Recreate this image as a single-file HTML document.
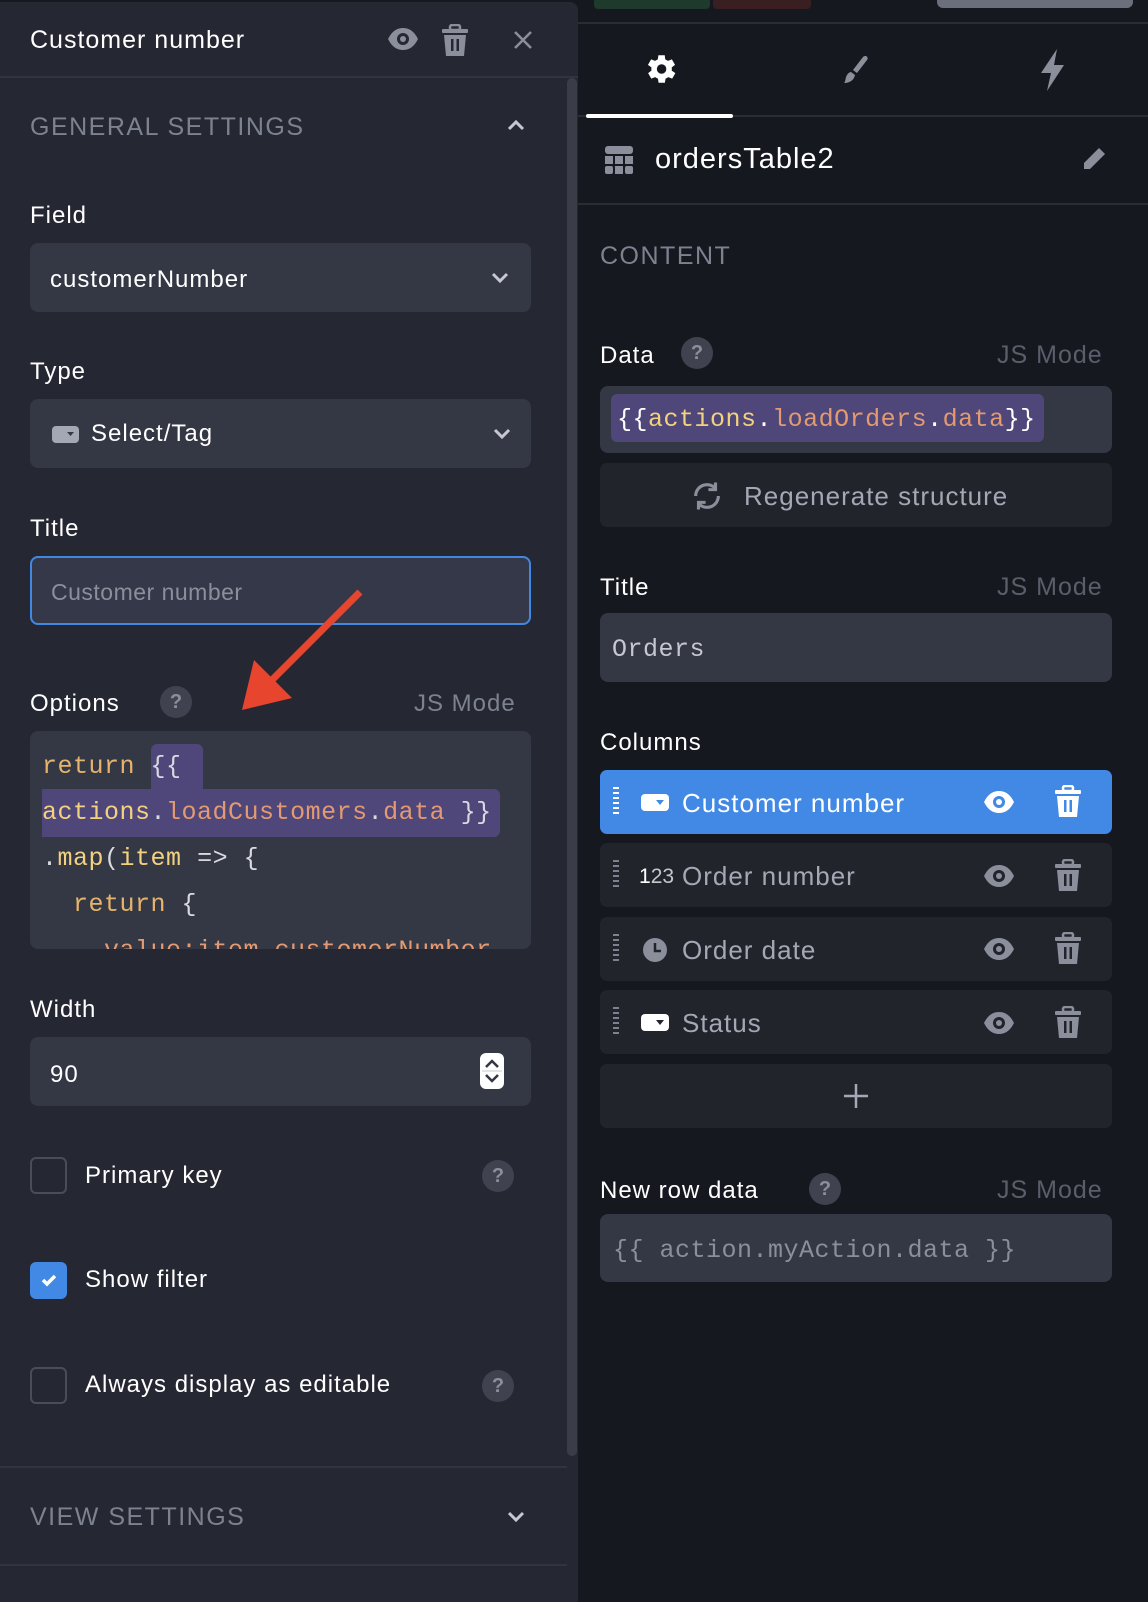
<!DOCTYPE html>
<html><head><meta charset="utf-8"><style>
*{box-sizing:border-box;margin:0;padding:0}
body{width:1148px;height:1602px;background:#16181f;font-family:"Liberation Sans",sans-serif;color:#fff;position:relative;overflow:hidden;letter-spacing:1px}
.a{position:absolute}
.lbl{font-size:24px;color:#fff;font-weight:500}
.muted{color:#7d8290}
.inp{position:absolute;background:#343744;border-radius:8px}
.mono{font-family:"Liberation Mono",monospace;letter-spacing:0.5px}
.q{position:absolute;width:32px;height:32px;border-radius:50%;background:#40434f;color:#8b8f9b;font-size:20px;font-weight:bold;text-align:center;line-height:32px;letter-spacing:0}
.row{position:absolute;left:600px;width:512px;height:64px;background:#22242c;border-radius:7px}
.row .t{position:absolute;left:82px;top:18px;font-size:26px;color:#a4a8b4;font-weight:500}
.grip{position:absolute;left:13px;top:17px;width:6px;height:30px;background:repeating-linear-gradient(#7d8290 0 2px,transparent 2px 5px)}
.cb{position:absolute;left:30px;width:37px;height:37px;border:2px solid #4a4d59;border-radius:6px}
</style></head><body>
<div class="a" style="left:594px;top:0;width:116px;height:9px;background:#1d3a2d;border-radius:0 0 4px 4px"></div>
<div class="a" style="left:713px;top:0;width:98px;height:9px;background:#3a1f22;border-radius:0 0 4px 4px"></div>
<div class="a" style="left:937px;top:0;width:196px;height:8px;background:#6b6f7c;border-radius:0 0 6px 6px"></div>
<div class="a" style="left:578px;top:22px;width:570px;height:2px;background:#2a2d37"></div>

<div class="a" style="left:0;top:2px;width:578px;height:1600px;background:#252732;border-radius:0 8px 0 0"></div>
<div class="a" style="left:567px;top:78px;width:10px;height:1378px;background:#3a3d48;border-radius:5px"></div>
<div class="a" style="left:0;top:76px;width:578px;height:2px;background:#31343f"></div>
<div class="a lbl" style="left:30px;top:26px;font-size:25px">Customer number</div>
<svg class="a" style="left:387px;top:26px" width="32" height="26" viewBox="0 0 32 26"><path d="M1 13C5 5 10 2 16 2s11 3 15 11c-4 8-9 11-15 11S5 21 1 13z" fill="#8b8f9b"/><circle cx="16" cy="13" r="6" fill="#252732"/><circle cx="16" cy="13" r="3" fill="#8b8f9b"/></svg>
<svg class="a" style="left:440px;top:24px" width="30" height="34" viewBox="0 0 30 34"><rect x="2" y="5" width="26" height="4" rx="1" fill="#8b8f9b"/><rect x="10" y="1" width="10" height="5" rx="2" fill="none" stroke="#8b8f9b" stroke-width="2.5"/><path d="M4 11h22l-2 21H6z" fill="#8b8f9b"/><rect x="11" y="15" width="2.5" height="12" fill="#252732"/><rect x="16.5" y="15" width="2.5" height="12" fill="#252732"/></svg>
<svg class="a" style="left:513px;top:30px" width="20" height="20" viewBox="0 0 20 20"><path d="M2 2L18 18M18 2L2 18" stroke="#8b8f9b" stroke-width="2.5"/></svg>

<div class="a muted" style="left:30px;top:113px;font-size:25px;letter-spacing:1.5px">GENERAL SETTINGS</div>
<svg class="a" style="left:506px;top:118px" width="20" height="14" viewBox="0 0 20 14"><path d="M3 11l7-7 7 7" stroke="#c5c8d0" stroke-width="3" fill="none"/></svg>

<div class="a lbl" style="left:30px;top:202px">Field</div>
<div class="inp" style="left:30px;top:243px;width:501px;height:69px"></div>
<div class="a lbl" style="left:50px;top:266px;font-size:24px">customerNumber</div>
<svg class="a" style="left:490px;top:271px" width="20" height="14" viewBox="0 0 20 14"><path d="M3 3l7 7 7-7" stroke="#c5c8d0" stroke-width="3" fill="none"/></svg>

<div class="a lbl" style="left:30px;top:358px">Type</div>
<div class="inp" style="left:30px;top:399px;width:501px;height:69px"></div>
<svg class="a" style="left:52px;top:426px" width="27" height="17" viewBox="0 0 27 17"><rect width="27" height="17" rx="4" fill="#a4a8b4"/><path d="M15 6h7l-3.5 4z" fill="#343744"/></svg>
<div class="a lbl" style="left:91px;top:420px">Select/Tag</div>
<svg class="a" style="left:492px;top:427px" width="20" height="14" viewBox="0 0 20 14"><path d="M3 3l7 7 7-7" stroke="#c5c8d0" stroke-width="3" fill="none"/></svg>

<div class="a lbl" style="left:30px;top:515px">Title</div>
<div class="inp" style="left:30px;top:556px;width:501px;height:69px;border:2px solid #4188e3;background:#353848"></div>
<div class="a" style="left:51px;top:579px;font-size:23px;color:#8b8f9b;letter-spacing:0.5px">Customer number</div>
<svg class="a" style="left:236px;top:586px" width="130" height="130" viewBox="0 0 130 130"><path d="M124 6L22 108" stroke="#e8452f" stroke-width="7"/><path d="M6 124l12-50 38 38z" fill="#e8452f"/></svg>

<div class="a lbl" style="left:30px;top:690px">Options</div>
<div class="q" style="left:160px;top:686px">?</div>
<div class="a muted" style="left:414px;top:690px;font-size:24px">JS Mode</div>
<div class="inp" style="left:30px;top:731px;width:501px;height:218px;overflow:hidden">
 <div class="a" style="left:121px;top:13px;width:52px;height:48px;background:#4f4679;border-radius:6px 6px 0 0"></div>
 <div class="a" style="left:12px;top:58px;width:458px;height:48px;background:#4f4679;border-radius:0 6px 6px 0"></div>
 <div class="a mono" style="left:12px;top:13px;font-size:25px;line-height:46px;color:#d8dae0;white-space:pre"><span style="color:#e6b46c">return</span> {{
<span style="color:#f3d27f">actions</span>.<span style="color:#e39a72">loadCustomers</span>.<span style="color:#e39a72">data</span> }}
.<span style="color:#f3d27f">map</span>(<span style="color:#f3d27f">item</span> =&gt; {
  <span style="color:#e6b46c">return</span> {
    <span style="color:#e39a72">value:item.customerNumber</span></div>
</div>

<div class="a lbl" style="left:30px;top:996px">Width</div>
<div class="inp" style="left:30px;top:1037px;width:501px;height:69px"></div>
<div class="a lbl" style="left:50px;top:1061px">90</div>
<svg class="a" style="left:480px;top:1053px" width="24" height="36" viewBox="0 0 24 36"><rect width="24" height="36" rx="6" fill="#fff"/><path d="M6 14l6-6 6 6M6 22l6 6 6-6" stroke="#343744" stroke-width="2.5" fill="none"/><path d="M2 18h20" stroke="#c5c8d0"/></svg>

<div class="cb" style="top:1157px"></div>
<div class="a lbl" style="left:85px;top:1162px">Primary key</div>
<div class="q" style="left:482px;top:1160px">?</div>
<div class="cb" style="top:1262px;background:#4189e5;border-color:#4189e5"></div>
<svg class="a" style="left:39px;top:1270px" width="20" height="20" viewBox="0 0 20 20"><path d="M4 10l4 4 8-8" stroke="#fff" stroke-width="3.5" fill="none"/></svg>
<div class="a lbl" style="left:85px;top:1266px">Show filter</div>
<div class="cb" style="top:1367px"></div>
<div class="a lbl" style="left:85px;top:1371px">Always display as editable</div>
<div class="q" style="left:482px;top:1370px">?</div>

<div class="a" style="left:0;top:1466px;width:567px;height:2px;background:#31343f"></div>
<div class="a muted" style="left:30px;top:1503px;font-size:25px;letter-spacing:1.5px">VIEW SETTINGS</div>
<svg class="a" style="left:506px;top:1510px" width="20" height="14" viewBox="0 0 20 14"><path d="M3 3l7 7 7-7" stroke="#c5c8d0" stroke-width="3" fill="none"/></svg>
<div class="a" style="left:0;top:1564px;width:567px;height:2px;background:#31343f"></div>

<svg class="a" style="left:641px;top:50px" width="38" height="38" viewBox="0 0 24 24"><path fill="#fff" d="M19.4 13a7.5 7.5 0 000-2l2.1-1.6-2-3.5-2.5 1a7 7 0 00-1.7-1L15 3.3h-4l-.4 2.6a7 7 0 00-1.7 1l-2.5-1-2 3.5L6.6 11a7.5 7.5 0 000 2l-2.1 1.6 2 3.5 2.5-1a7 7 0 001.7 1l.4 2.6h4l.4-2.6a7 7 0 001.7-1l2.5 1 2-3.5z"/><circle cx="13" cy="12" r="3" fill="#16181f"/></svg>
<svg class="a" style="left:840px;top:54px" width="30" height="32" viewBox="0 0 30 32"><path d="M26 2c2 1 2 3 1 4L17 19l-4-3L23 3c1-1 2-1 3-1z" fill="#8b8f9b"/><path d="M11 18l4 3c-1 5-5 8-11 8 2-2 1-5 3-8 1-2 3-3 4-3z" fill="#8b8f9b"/></svg>
<svg class="a" style="left:1037px;top:48px" width="30" height="44" viewBox="0 0 30 44"><path d="M20 1L4 25h10l-4 18 17-26H17z" fill="#8b8f9b"/></svg>
<div class="a" style="left:578px;top:115px;width:570px;height:2px;background:#2a2d37"></div>
<div class="a" style="left:586px;top:114px;width:147px;height:4px;background:#fff;border-radius:2px"></div>

<svg class="a" style="left:605px;top:146px" width="28" height="28" viewBox="0 0 28 28"><rect width="28" height="8" rx="3" fill="#8b8f9b"/><g fill="#8b8f9b"><rect y="10" width="8" height="8"/><rect x="10" y="10" width="8" height="8"/><rect x="20" y="10" width="8" height="8"/><rect y="20" width="8" height="8" rx="2"/><rect x="10" y="20" width="8" height="8"/><rect x="20" y="20" width="8" height="8" rx="2"/></g></svg>
<div class="a" style="left:655px;top:143px;font-size:29px;font-weight:500">ordersTable2</div>
<svg class="a" style="left:1081px;top:146px" width="26" height="26" viewBox="0 0 26 26"><path d="M18 2l6 6L9 23H3v-6z" fill="#8b8f9b"/></svg>
<div class="a" style="left:578px;top:203px;width:570px;height:2px;background:#2a2d37"></div>

<div class="a muted" style="left:600px;top:242px;font-size:25px;letter-spacing:1.5px">CONTENT</div>
<div class="a lbl" style="left:600px;top:342px">Data</div>
<div class="q" style="left:681px;top:337px">?</div>
<div class="a" style="left:997px;top:341px;font-size:25px;color:#5a5e6a">JS Mode</div>
<div class="inp" style="left:600px;top:386px;width:512px;height:67px"></div>
<div class="a" style="left:611px;top:394px;width:433px;height:48px;background:#4f4679;border-radius:6px"></div>
<div class="a mono" style="left:617px;top:405px;font-size:25px;color:#fff">{{<span style="color:#f3d27f">actions</span>.<span style="color:#e39a72">loadOrders</span>.<span style="color:#e39a72">data</span>}}</div>
<div class="a" style="left:600px;top:463px;width:512px;height:64px;background:#22242c;border-radius:7px"></div>
<svg class="a" style="left:690px;top:479px" width="34" height="34" viewBox="0 0 24 24"><path d="M20 12a8 8 0 01-14 5.3M4 12a8 8 0 0114-5.3" stroke="#8b8f9b" stroke-width="2.2" fill="none"/><path d="M18 2.5v5h-5M6 21.5v-5h5" stroke="#8b8f9b" stroke-width="2.2" fill="none"/></svg>
<div class="a" style="left:744px;top:481px;font-size:26px;color:#a4a8b4;font-weight:500">Regenerate structure</div>

<div class="a lbl" style="left:600px;top:574px">Title</div>
<div class="a" style="left:997px;top:573px;font-size:25px;color:#5a5e6a">JS Mode</div>
<div class="inp" style="left:600px;top:613px;width:512px;height:69px"></div>
<div class="a mono" style="left:612px;top:635px;font-size:25px;color:#c5c8d0">Orders</div>

<div class="a lbl" style="left:600px;top:729px">Columns</div>
<div class="row" style="top:770px;background:#4189e5"><div class="grip" style="background:repeating-linear-gradient(#fff 0 2px,transparent 2px 5px)"></div>
<svg class="a" style="left:41px;top:24px" width="28" height="17" viewBox="0 0 28 17"><rect width="28" height="17" rx="4" fill="#fff"/><path d="M15 6h8l-4 5z" fill="#4189e5"/></svg>
<div class="t" style="color:#fff">Customer number</div></div>
<div class="row" style="top:843px"><div class="grip"></div><div class="a" style="left:39px;top:22px;font-size:21px;color:#fff;letter-spacing:0">1<span style="color:#c5c8d0">23</span></div><div class="t">Order number</div></div>
<div class="row" style="top:917px"><div class="grip"></div><svg class="a" style="left:42px;top:20px" width="26" height="26" viewBox="0 0 26 26"><circle cx="13" cy="13" r="12" fill="#8b8f9b"/><path d="M13 6v8h6" stroke="#22242c" stroke-width="2.5" fill="none"/></svg><div class="t">Order date</div></div>
<div class="row" style="top:990px"><div class="grip"></div><svg class="a" style="left:41px;top:24px" width="28" height="17" viewBox="0 0 28 17"><rect width="28" height="17" rx="4" fill="#fff"/><path d="M15 6h8l-4 5z" fill="#22242c"/></svg><div class="t">Status</div></div>

<svg width="0" height="0" style="position:absolute"><defs>
<g id="eye"><path d="M1 13C5 5 10 2 16 2s11 3 15 11c-4 8-9 11-15 11S5 21 1 13z"/><circle cx="16" cy="13" r="6" fill="var(--bg)"/><circle cx="16" cy="13" r="3"/></g>
<g id="tr"><rect x="2" y="5" width="26" height="4" rx="1"/><rect x="10" y="1" width="10" height="5" rx="2" fill="none" stroke="currentColor" stroke-width="2.5"/><path d="M4 11h22l-2 21H6z"/><rect x="11" y="15" width="2.5" height="12" fill="var(--bg)"/><rect x="16.5" y="15" width="2.5" height="12" fill="var(--bg)"/></g>
</defs></svg>
<svg class="a" style="left:983px;top:789px;--bg:#4189e5;fill:#fff" width="32" height="26" viewBox="0 0 32 26"><use href="#eye"/></svg>
<svg class="a" style="left:1053px;top:785px;--bg:#4189e5;fill:#fff;color:#fff" width="30" height="34" viewBox="0 0 30 34"><use href="#tr"/></svg>
<svg class="a" style="left:983px;top:863px;--bg:#22242c;fill:#8b8f9b" width="32" height="26" viewBox="0 0 32 26"><use href="#eye"/></svg>
<svg class="a" style="left:1053px;top:859px;--bg:#22242c;fill:#8b8f9b;color:#8b8f9b" width="30" height="34" viewBox="0 0 30 34"><use href="#tr"/></svg>
<svg class="a" style="left:983px;top:936px;--bg:#22242c;fill:#8b8f9b" width="32" height="26" viewBox="0 0 32 26"><use href="#eye"/></svg>
<svg class="a" style="left:1053px;top:932px;--bg:#22242c;fill:#8b8f9b;color:#8b8f9b" width="30" height="34" viewBox="0 0 30 34"><use href="#tr"/></svg>
<svg class="a" style="left:983px;top:1010px;--bg:#22242c;fill:#8b8f9b" width="32" height="26" viewBox="0 0 32 26"><use href="#eye"/></svg>
<svg class="a" style="left:1053px;top:1006px;--bg:#22242c;fill:#8b8f9b;color:#8b8f9b" width="30" height="34" viewBox="0 0 30 34"><use href="#tr"/></svg>

<div class="row" style="top:1064px"></div>
<svg class="a" style="left:843px;top:1083px" width="26" height="26" viewBox="0 0 26 26"><path d="M13 1v24M1 13h24" stroke="#a4a8b4" stroke-width="2.5"/></svg>

<div class="a lbl" style="left:600px;top:1177px">New row data</div>
<div class="q" style="left:809px;top:1173px">?</div>
<div class="a" style="left:997px;top:1176px;font-size:25px;color:#5a5e6a">JS Mode</div>
<div class="inp" style="left:600px;top:1214px;width:512px;height:68px"></div>
<div class="a mono" style="left:613px;top:1236px;font-size:25px;color:#8b8f9b">{{ action.myAction.data }}</div>
</body></html>
